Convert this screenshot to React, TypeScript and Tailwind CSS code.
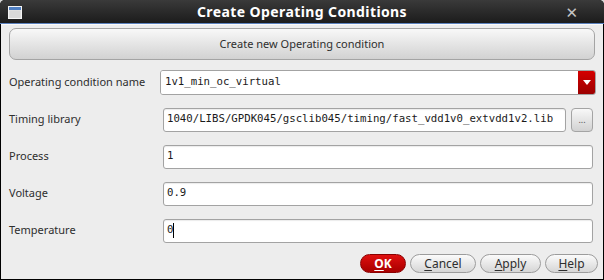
import { Fragment } from "react";

function WindowIcon() {
  return (
    <svg width="14" height="13" viewBox="0 0 14 13" className="block">
      <rect x="0.5" y="0.5" width="13" height="12" fill="#e4e4e4" stroke="#f4f4f4" />
      <rect x="1" y="1" width="12" height="3" fill="#4f7fc3" />
      <rect x="1.5" y="4.5" width="11" height="7.5" fill="#d8d8d8" />
    </svg>
  );
}

function Field(props: { value: string; cursor?: boolean; className?: string }) {
  return (
    <div
      className={`flex items-center h-[24px] bg-white border border-[#a3a3a3] rounded-[3px] pl-[3px] shadow-[inset_0_1px_1px_rgba(0,0,0,0.08)] ${props.className ?? ""}`}
    >
      <span className="font-['DejaVu_Sans_Mono',monospace] text-[10.7px] text-[#1a1a1a] whitespace-nowrap">
        {props.value}
      </span>
      {props.cursor && <span className="w-px h-[15px] bg-black" />}
    </div>
  );
}

function Row(props: { label: string; children: React.ReactNode }) {
  return (
    <div className="flex items-center h-[37px]">
      <div className="w-[160px] pl-[8px] text-[11px] text-[#2e2e2e] whitespace-nowrap">{props.label}</div>
      {props.children}
    </div>
  );
}

function PillButton(props: { u: string; rest: string; w: string; red?: boolean }) {
  return (
    <div
      className={`flex items-center justify-center h-[19px] rounded-full border text-[12px] ${props.w} ${
        props.red
          ? "bg-gradient-to-b from-[#e01010] to-[#a80000] border-[#8a0000] text-white font-bold"
          : "bg-gradient-to-b from-[#fbfbfb] to-[#d6d6d6] border-[#9c9c9c] text-[#2e2e2e]"
      }`}
    >
      <span className="underline underline-offset-2">{props.u}</span>
      <span>{props.rest}</span>
    </div>
  );
}

export default function App() {
  return (
    <Fragment>
      <div className="w-[604px] h-[280px] bg-[#d8d8d8] font-['Noto_Sans',sans-serif]">
        <div className="flex flex-col w-[604px] h-[280px] rounded-t-[5px] overflow-hidden bg-black">
          <div className="relative flex items-center justify-center h-[23px] bg-gradient-to-b from-[#3a3a3a] to-[#1c1c1c]">
            <div className="absolute left-[8px] top-[6px]">
              <WindowIcon />
            </div>
            <span className="text-white font-bold text-[14px] tracking-[0.4px]">Create Operating Conditions</span>
            <span className="absolute right-[26px] top-[2px] text-[#c4c4c4] font-bold text-[15px] font-['DejaVu_Sans',sans-serif]">✕</span>
          </div>
          <div className="h-px bg-[#5c82be]" />
          <div className="flex-1 flex flex-col mx-px mb-px bg-[#ededed] border-t border-[#fafafa]">
            <div className="mx-[8px] mt-[3px] h-[32px] flex items-center justify-center rounded-[7px] border border-[#a4a4a4] bg-gradient-to-b from-[#f8f8f8] to-[#d2d2d2] text-[11px] text-[#2e2e2e]">
              Create new Operating condition
            </div>
            <div className="mt-[4px]">
              <Row label="Operating condition name">
                <div className="flex h-[25px] w-[436px] -ml-[1px] rounded-[3px] border border-[#a3a3a3] overflow-hidden">
                  <div className="flex-1 flex items-center bg-white px-[4px]">
                    <span className="font-['DejaVu_Sans_Mono',monospace] text-[10.7px] text-[#1a1a1a]">1v1_min_oc_virtual</span>
                  </div>
                  <div className="w-[17px] flex items-center justify-center bg-gradient-to-b from-[#d40000] to-[#9c0000]">
                    <svg width="8" height="5" viewBox="0 0 8 5">
                      <path d="M0 0h8L4 5z" fill="#fff" />
                    </svg>
                  </div>
                </div>
              </Row>
              <Row label="Timing library">
                <Field className="ml-[2px] w-[403px]" value="1040/LIBS/GPDK045/gsclib045/timing/fast_vdd1v0_extvdd1v2.lib" />
                <div className="ml-[5px] w-[22px] h-[24px] flex items-center justify-center rounded-[4px] border border-[#a4a4a4] bg-gradient-to-b from-[#f8f8f8] to-[#d2d2d2] text-[9px] text-[#555] leading-none">
                  ...
                </div>
              </Row>
              <Row label="Process">
                <Field className="ml-[2px] w-[430px]" value="1" />
              </Row>
              <Row label="Voltage">
                <Field className="ml-[2px] w-[430px]" value="0.9" />
              </Row>
              <Row label="Temperature">
                <Field className="ml-[2px] w-[430px]" value="0" cursor />
              </Row>
            </div>
            <div className="flex justify-end gap-[4px] pr-[5px] mt-[5px]">
              <PillButton u="O" rest="K" w="w-[46px]" red />
              <PillButton u="C" rest="ancel" w="w-[66px]" />
              <PillButton u="A" rest="pply" w="w-[61px]" />
              <PillButton u="H" rest="elp" w="w-[53px]" />
            </div>
          </div>
        </div>
      </div>
    </Fragment>
  );
}
